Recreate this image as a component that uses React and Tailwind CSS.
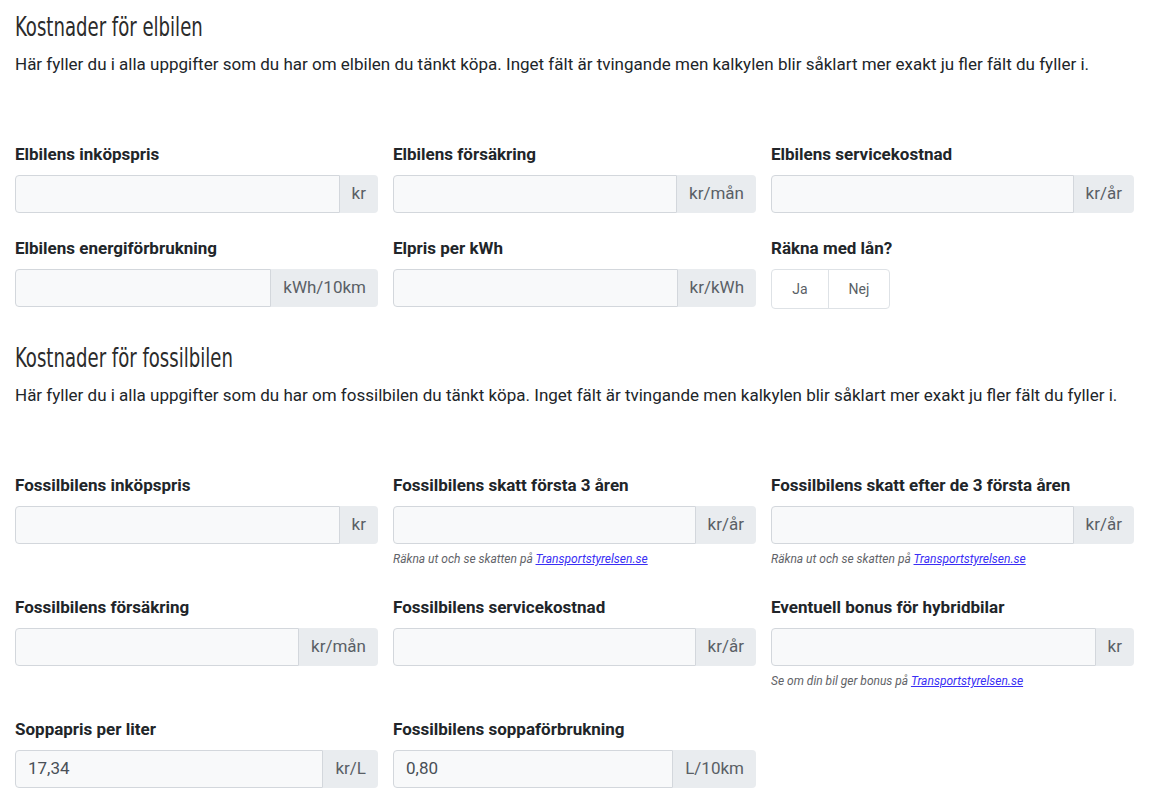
import React from 'react';

const body = { fontFamily: 'Roboto, "Liberation Sans", Arial, sans-serif' };
const head = { fontFamily: '"DejaVu Sans Condensed", "Liberation Sans", sans-serif' };

const intro = (car) =>
    `Här fyller du i alla uppgifter som du har om ${car} du tänkt köpa. Inget fält är tvingande men kalkylen blir såklart mer exakt ju fler fält du fyller i.`;

function Field({ label, unit, value = '', help, linkText = 'Transportstyrelsen.se' }) {
    return (
        <div className="flex flex-col">
            <label className="mb-2 text-[17px] leading-[23px] font-bold text-[#212529]">{label}</label>
            <div className="mt-px flex h-[38px]">
                <input
                    defaultValue={value}
                    className="min-w-0 flex-1 rounded-l-[4px] border border-[#d3d7dc] bg-[#f8f9fa] px-3 text-[17px] text-[#495057] outline-none"
                    style={body}
                />
                <span className="flex items-center rounded-r-[4px] bg-[#e9ecef] px-3 text-[17px] text-[#5a5f66]">
                    {unit}
                </span>
            </div>
            {help && (
                <p className="mt-[6px] pb-[4px] text-xs leading-[18px] italic text-[#5f6368]">
                    {help}{' '}
                    <a href="#" className="text-[#3a2ff5] underline">{linkText}</a>
                </p>
            )}
        </div>
    );
}

function LoanField() {
    return (
        <div className="flex flex-col">
            <label className="mb-2 text-[17px] leading-[23px] font-bold text-[#212529]">Räkna med lån?</label>
            <div className="mt-px flex h-[40px] w-[119px] rounded-[4px] border border-[#dee2e6] bg-white text-sm text-[#5a5f66]">
                <button className="w-[57px] border-r border-[#dee2e6]">Ja</button>
                <button className="flex-1">Nej</button>
            </div>
        </div>
    );
}

function Section({ title, car, children, className = '' }) {
    return (
        <section className={className}>
            <h2 className="text-[27px] leading-[31px] font-normal text-[#2b2b2b]" style={head}>
                <span className="inline-block origin-left scale-x-[0.745]">{title}</span>
            </h2>
            <p className="mt-[10px] text-[17px] leading-6 text-[#212529]">{intro(car)}</p>
            <div className="mt-[67px] grid w-[1119px] grid-cols-3 gap-x-[15px] gap-y-6">
                {children}
            </div>
        </section>
    );
}

export default function App() {
    return (
        <div className="min-h-screen bg-white px-[15px] pt-[11px]" style={body}>
            <Section title="Kostnader för elbilen" car="elbilen">
                <Field label="Elbilens inköpspris" unit="kr" />
                <Field label="Elbilens försäkring" unit="kr/mån" />
                <Field label="Elbilens servicekostnad" unit="kr/år" />
                <Field label="Elbilens energiförbrukning" unit="kWh/10km" />
                <Field label="Elpris per kWh" unit="kr/kWh" />
                <LoanField />
            </Section>

            <Section title="Kostnader för fossilbilen" car="fossilbilen" className="mt-[33px]">
                <Field label="Fossilbilens inköpspris" unit="kr" />
                <Field label="Fossilbilens skatt första 3 åren" unit="kr/år" help="Räkna ut och se skatten på" />
                <Field label="Fossilbilens skatt efter de 3 första åren" unit="kr/år" help="Räkna ut och se skatten på" />
                <Field label="Fossilbilens försäkring" unit="kr/mån" />
                <Field label="Fossilbilens servicekostnad" unit="kr/år" />
                <Field label="Eventuell bonus för hybridbilar" unit="kr" help="Se om din bil ger bonus på" />
                <Field label="Soppapris per liter" unit="kr/L" value="17,34" />
                <Field label="Fossilbilens soppaförbrukning" unit="L/10km" value="0,80" />
            </Section>
        </div>
    );
}
